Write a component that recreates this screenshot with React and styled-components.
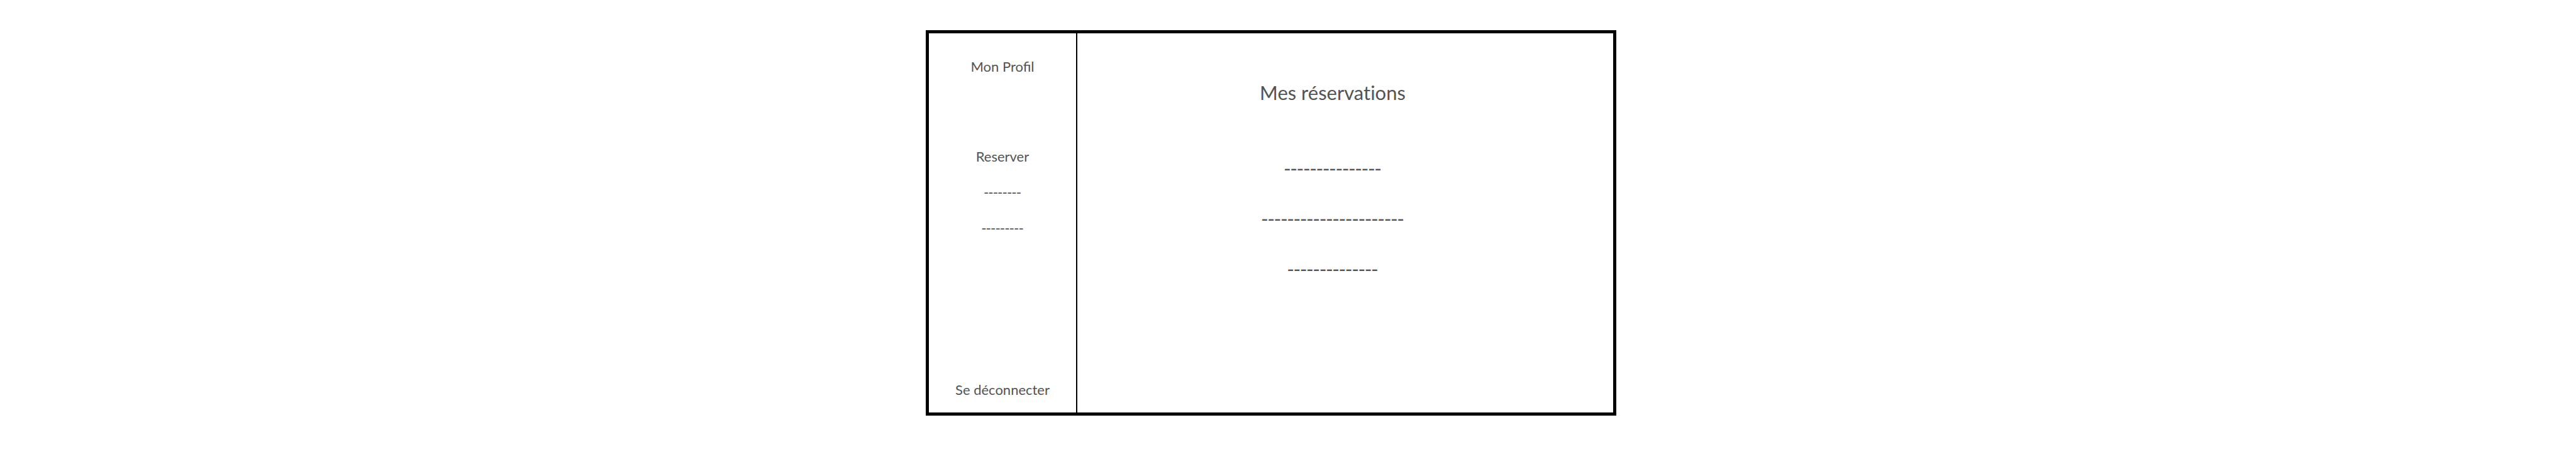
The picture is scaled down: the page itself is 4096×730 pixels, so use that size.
import React from "react";
import styled, { createGlobalStyle, css } from "styled-components";

const GlobalStyle = createGlobalStyle`
  *, *::before, *::after { box-sizing: border-box; }
  body {
    margin: 0;
    background: #ffffff;
    color: #535353;
    font-family: Lato, "Open Sans", sans-serif;
  }
`;

const Page = styled.div`
  display: grid;
  grid-template-columns: 1472fr 1098fr 1526fr;
  min-height: 100vh;
  padding: 48px 0 69px;
`;

const Frame = styled.div`
  grid-column: 2;
  display: flex;
  border: 5px solid #000000;
`;

const Sidebar = styled.nav`
  flex: 0 0 236px;
  display: flex;
  flex-direction: column;
  align-items: center;
  padding: 24px 0 8px;
  border-right: 2px solid #000000;
`;

const itemText = css`
  color: inherit;
  font-family: inherit;
  font-size: 22px;
  line-height: 57px;
  white-space: nowrap;
`;

const NavLink = styled.a`
  ${itemText}
  text-decoration: none;
`;

const SlotLink = styled(NavLink)`
  font-family: "Open Sans", sans-serif;
  font-size: 23px;
`;

const NavGroup = styled.div`
  display: flex;
  flex-direction: column;
  align-items: center;
  margin: 86px 0;
`;

const LogoutButton = styled.button`
  ${itemText}
  margin-top: auto;
  padding: 0;
  border: 0;
  background: none;
  cursor: pointer;
`;

const Main = styled.main`
  flex: 1;
  padding: 54px 40px 40px 0;
  text-align: center;
`;

const Title = styled.h1`
  margin: 0 0 40px;
  font-size: 31px;
  font-weight: 400;
  font-variant-ligatures: none;
  line-height: 80px;
`;

const Reservations = styled.ul`
  margin: 0;
  padding: 0;
  list-style: none;
`;

const Reservation = styled.li`
  font-family: "Open Sans", sans-serif;
  font-size: 32px;
  line-height: 80px;
  white-space: nowrap;
`;

const slots = ["--------", "---------"];
const reservations = ["---------------", "----------------------", "--------------"];

export default function App() {
  return (
    <>
      <GlobalStyle />
      <Page>
        <Frame>
          <Sidebar>
            <NavLink href="#profil">Mon Profil</NavLink>
            <NavGroup>
              <NavLink href="#reserver">Reserver</NavLink>
              {slots.map((slot) => (
                <SlotLink key={slot} href="#reserver">{slot}</SlotLink>
              ))}
            </NavGroup>
            <LogoutButton type="button">Se déconnecter</LogoutButton>
          </Sidebar>
          <Main>
            <Title>Mes réservations</Title>
            <Reservations>
              {reservations.map((reservation) => (
                <Reservation key={reservation}>{reservation}</Reservation>
              ))}
            </Reservations>
          </Main>
        </Frame>
      </Page>
    </>
  );
}
